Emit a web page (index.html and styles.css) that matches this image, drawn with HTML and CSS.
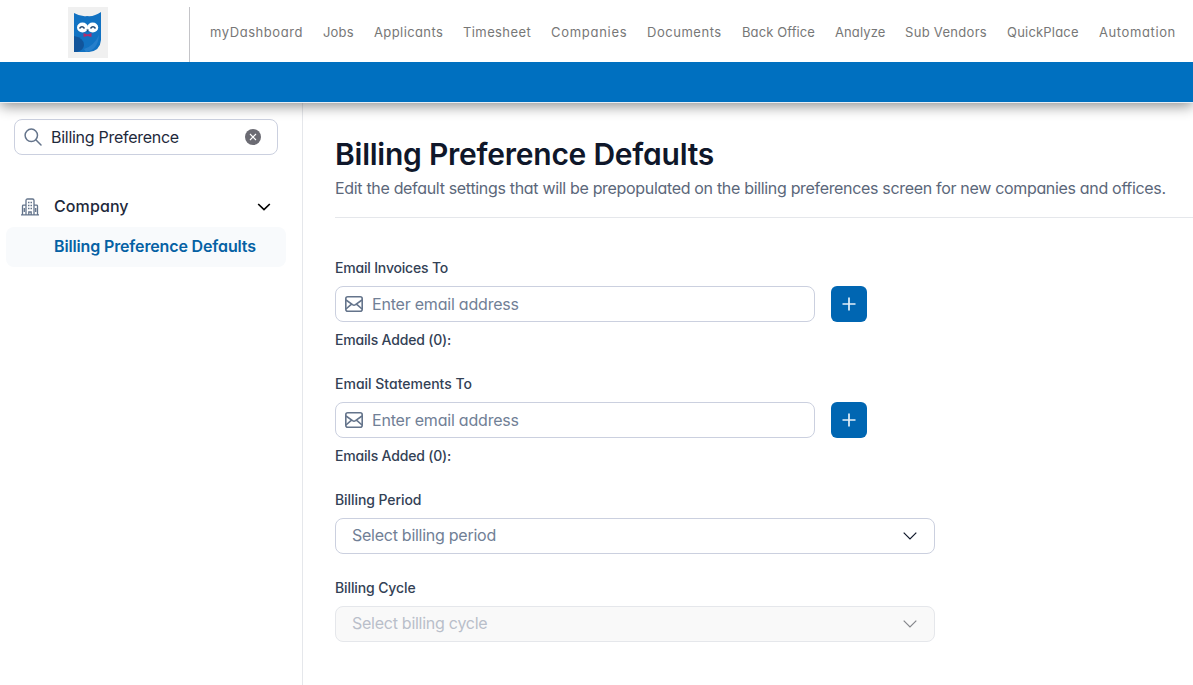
FILE: index.html
```
<!DOCTYPE html>
<html lang="en">
<head>
<meta charset="utf-8">
<title>Billing Preference Defaults</title>
<link rel="stylesheet" href="styles.css">
</head>
<body>
<header class="topbar">
  <div class="brand">
    <svg class="logo" width="40" height="51" viewBox="0 0 40 51">
      <rect width="40" height="51" fill="#f0f0f0"/>
      <path d="M6 6Q13 10 19 9Q26 10 33 5V33Q32 44 21 45H6Z" fill="#1272c2"/>
      <path d="M6 29Q16 31 16 38Q16 43 9 45H6Z" fill="#12559b"/>
      <path d="M16 42Q26 39 31 28Q30 43 18 45Z" fill="#277fcb"/>
      <ellipse cx="14.500" cy="20.500" rx="5.500" ry="5" fill="#fff"/>
      <ellipse cx="24.700" cy="20.500" rx="5.500" ry="5" fill="#fff"/>
      <path d="M11.500 21.500Q14 18 16.500 21.500M22.500 21.500Q25 18 27.500 21.500" fill="none" stroke="#24476f" stroke-width="1.500"/>
      <path d="M18.300 22.500h2.600l-1.300 2.500z" fill="#29496f"/>
      <path d="M15.500 26l4 1.500 4-1.500v4l-4-1-4 1z" fill="#b02d6c"/>
    </svg>
  </div>
  <nav class="nav">
    <a>myDashboard</a><a>Jobs</a><a>Applicants</a><a>Timesheet</a><a>Companies</a><a>Documents</a><a>Back Office</a><a>Analyze</a><a>Sub Vendors</a><a>QuickPlace</a><a>Automation</a>
  </nav>
</header>
<div class="band"></div>
<div class="layout">
  <aside class="sidebar">
    <div class="search">
      <svg width="18" height="18" viewBox="0 0 18 18" fill="none" stroke="#64748b" stroke-width="1.500" stroke-linecap="round"><circle cx="7.300" cy="7.300" r="6.200"/><path d="M11.800 11.800L17 17"/></svg>
      <span class="query">Billing Preference</span>
      <svg class="clear" width="16" height="16" viewBox="0 0 16 16"><circle cx="8" cy="8" r="8" fill="#6b6b73"/><path d="M5 5l6 6M11 5l-6 6" stroke="#fff" stroke-width="1.100"/></svg>
    </div>
    <div class="group">
      <svg width="18" height="18" viewBox="0 0 18 18" fill="none" stroke="#64748b" stroke-width="1.300"><path d="M0 16.800h18M1.500 16.500V8Q1.500 7.200 2.500 7.200H5M5 16.500V2.500Q5 1 6.500 1h5Q13 1 13 2.500v14M13 7.200h2.500Q16.500 7.200 16.500 8v8.500M3.300 10v4M14.700 10v4M7.800 16.500v-2.500h2.400v2.500"/><path d="M7 4.500h1.500M9.500 4.500H11M7 7.500h1.500M9.500 7.500H11M7 10.500h1.500M9.500 10.500H11"/></svg>
      <span class="group-name">Company</span>
      <svg width="14" height="8" viewBox="0 0 14 8" fill="none" stroke="#000" stroke-width="1.700"><path d="M1.200 1L7 6.500L12.800 1"/></svg>
    </div>
    <div class="subitem">Billing Preference Defaults</div>
  </aside>
  <main class="main">
    <div class="heading">
      <h1>Billing Preference Defaults</h1>
      <p>Edit the default settings that will be prepopulated on the billing preferences screen for new companies and offices.</p>
    </div>
    <section class="field email">
      <label class="t-invoices">Email Invoices To</label>
      <div class="row">
        <div class="input"><svg width="18" height="16" viewBox="0 0 18 16" fill="none" stroke="#64748b" stroke-width="1.600"><rect x=".8" y=".8" width="16.400" height="14.400" rx="2"/><path d="M1 4L7.500 8.700Q9 9.700 10.500 8.700L17 4M1 13L6.500 8.200M17 13L11.500 8.200"/></svg><span class="t-enter">Enter email address</span></div>
        <button class="add"><svg width="14" height="14" viewBox="0 0 14 14"><path d="M7 .5v13M.5 7h13" stroke="#e3f0f9" stroke-width="1.700"/></svg></button>
      </div>
      <div class="added">Emails Added (0):</div>
    </section>
    <section class="field email">
      <label class="t-statements">Email Statements To</label>
      <div class="row">
        <div class="input"><svg width="18" height="16" viewBox="0 0 18 16" fill="none" stroke="#64748b" stroke-width="1.600"><rect x=".8" y=".8" width="16.400" height="14.400" rx="2"/><path d="M1 4L7.500 8.700Q9 9.700 10.500 8.700L17 4M1 13L6.500 8.200M17 13L11.500 8.200"/></svg><span class="t-enter">Enter email address</span></div>
        <button class="add"><svg width="14" height="14" viewBox="0 0 14 14"><path d="M7 .5v13M.5 7h13" stroke="#e3f0f9" stroke-width="1.700"/></svg></button>
      </div>
      <div class="added">Emails Added (0):</div>
    </section>
    <section class="field choice">
      <label class="t-period">Billing Period</label>
      <div class="select"><span>Select billing period</span><svg width="14" height="8" viewBox="0 0 14 8" fill="none" stroke="#0f172a" stroke-width="1.200"><path d="M.7 .7L7 7L13.300 .7"/></svg></div>
    </section>
    <section class="field choice">
      <label class="t-cycle">Billing Cycle</label>
      <div class="select disabled"><span>Select billing cycle</span><svg width="14" height="8" viewBox="0 0 14 8" fill="none" stroke="#85868b" stroke-width="1.200"><path d="M.7 .7L7 7L13.300 .7"/></svg></div>
    </section>
  </main>
</div>
</body>
</html>
```
FILE: styles.css
```
* { box-sizing: border-box; }
body {
  margin: 0;
  height: 685px;
  overflow: hidden;
  background: #fff;
  font: 16px/24px Inter, "Liberation Sans", sans-serif;
  font-feature-settings: "cv11";
  white-space: nowrap;
}
svg { display: block; flex: none; }
.topbar { position: relative; z-index: 1; display: flex; height: 62px; padding-top: 7px; background: #fff; }
.brand { width: 190px; padding-left: 68px; border-right: 1px solid #c4c4c8; }
.nav {
  display: grid;
  grid-template-columns: 93px 31px 69px 68px 76px 75px 73px 50px 82px 72px 77px;
  column-gap: 20px;
  padding: 13px 0 0 20px;
  font-size: 13px;
  color: #777;
  letter-spacing: .2px;
}
.nav a:nth-child(1) { letter-spacing: .56px; }
.nav a:nth-child(3), .nav a:nth-child(4) { letter-spacing: .4px; }
.nav a:nth-child(5) { letter-spacing: .72px; }
.nav a:nth-child(6) { letter-spacing: .53px; }
.nav a:nth-child(7), .nav a:nth-child(8) { letter-spacing: .1px; }
.nav a:nth-child(9) { letter-spacing: .3px; }
.nav a:nth-child(11) { letter-spacing: .6px; }
.band {
  position: relative;
  height: 41px;
  background: #0070c0;
  border-bottom: 1px solid #e8eef4;
  box-shadow: 0 3px 14px rgba(0, 0, 0, .45);
}
.layout { display: flex; height: 582px; }
.sidebar { width: 303px; padding: 16px 16px 0 6px; border-right: 1px solid #e5e7eb; }
.search {
  display: flex;
  align-items: center;
  width: 264px;
  height: 36px;
  margin-left: 8px;
  padding: 0 16px 0 9px;
  border: 1px solid #cbd0df;
  border-radius: 8px;
  color: #1e293b;
}
.query { margin-left: 9px; letter-spacing: -.28px; }
.clear { margin-left: auto; }
.group { display: flex; align-items: center; height: 40px; margin-top: 32px; padding: 0 15px; color: #1e293b; }
.group-name { flex: 1; margin-left: 15px; padding-bottom: 2px; font-weight: 500; letter-spacing: .1px; }
.subitem {
  height: 40px;
  padding-left: 48px;
  border-radius: 8px;
  background: #f8fafc;
  color: #0561a4;
  font-weight: 600;
  line-height: 39px;
  letter-spacing: -.14px;
}
.main { flex: 1; padding: 33px 0 0 32px; }
.heading { height: 82px; border-bottom: 1px solid #e5e7eb; }
h1 { margin: 0; color: #0f172a; font-size: 30px; font-weight: 600; line-height: 36px; letter-spacing: -.24px; }
p { margin: 4px 0 0; color: #5b677a; letter-spacing: -.323px; }
.field { color: #334155; font-size: 14px; font-weight: 500; }
.email { height: 116px; }
.heading + .field { margin-top: 38px; }
.choice { height: 88px; }
label { display: block; height: 30px; }
.t-invoices, .added { letter-spacing: -.18px; }
.t-period { letter-spacing: -.08px; }
.t-cycle { letter-spacing: -.12px; }
.row { display: flex; gap: 16px; letter-spacing: -.21px; }
.input, .select {
  display: flex;
  align-items: center;
  height: 36px;
  border: 1px solid #cbd0df;
  border-radius: 8px;
  background: #fff;
  color: #718096;
  font-size: 16px;
  font-weight: 400;
}
.input { width: 480px; gap: 9px; padding-left: 9px; }
.select { justify-content: space-between; width: 600px; padding: 0 17px 2px 16px; letter-spacing: -.26px; }
.select svg { margin-top: 2px; }
.disabled { border-color: #e5e7eb; background: #f9f9f9; color: #b9bfca; }
.add { display: grid; place-items: center; width: 36px; height: 36px; padding: 0; border: 0; border-radius: 6px; background: #0066b2; }
.added { height: 36px; padding-top: 6px; }
```
